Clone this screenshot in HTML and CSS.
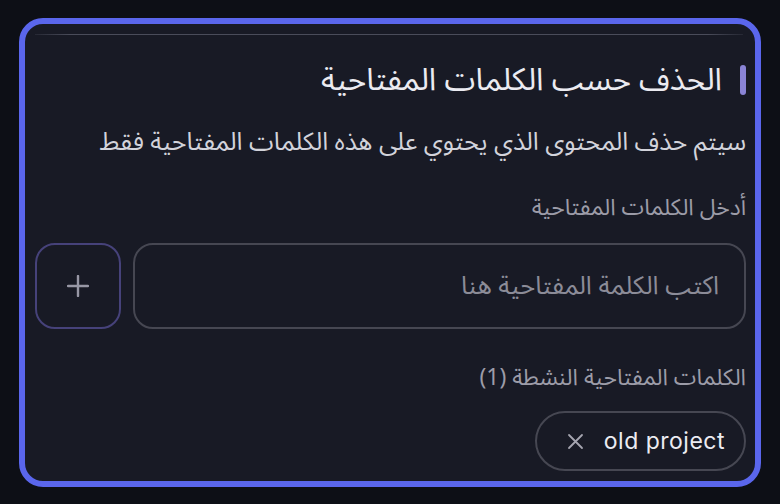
FILE: index.html
```html
<!DOCTYPE html>
<html lang="ar" dir="rtl">
<head>
<meta charset="utf-8">
<link rel="stylesheet" href="styles.css">
</head>
<body>
<div class="frame">
  <div class="topline"></div>
  <h2 class="title"><span class="bar"></span><span>الحذف حسب الكلمات المفتاحية</span></h2>
  <p class="desc">سيتم حذف المحتوى الذي يحتوي على هذه الكلمات المفتاحية فقط</p>
  <div class="label">أدخل الكلمات المفتاحية</div>
  <div class="input-row">
    <div class="input"><span class="placeholder">اكتب الكلمة المفتاحية هنا</span></div>
    <button class="add" type="button" aria-label="إضافة">
      <svg width="22" height="22" viewBox="0 0 22 22"><path d="M11 1v20M1 11h20" stroke="#9797a5" stroke-width="2.4" stroke-linecap="round" fill="none"/></svg>
    </button>
  </div>
  <div class="label label2">الكلمات المفتاحية النشطة (1)</div>
  <div class="chips">
    <div class="chip"><span class="chip-text" dir="ltr">old project</span><span class="x">
      <svg width="17" height="17" viewBox="0 0 17 17"><path d="M2 2l13 13M15 2L2 15" stroke="#a5a5b0" stroke-width="1.8" stroke-linecap="round" fill="none"/></svg>
    </span></div>
  </div>
</div>
</body>
</html>
```

FILE: styles.css
```css
* { box-sizing: border-box; }
html, body { margin: 0; padding: 0; }
body {
  background: #0d0f16;
  font-family: "Noto Sans Arabic", "DejaVu Sans", "Noto Sans", sans-serif;
  width: 780px;
  height: 504px;
  overflow: hidden;
}
.frame {
  margin: 18px 19px 0 19px;
  width: 742px;
  height: 469px;
  border: 6px solid #5a66ec;
  border-radius: 24px;
  background: #181a25;
  padding: 10px 9px 0 10px;
  overflow: hidden;
}
.topline {
  height: 1px;
  margin: 0 3px 0 0;
  background: linear-gradient(to left, rgba(70,72,86,0.3), #4a4c5a 5%, #4a4c5a 95%, rgba(70,72,86,0.3));
}
.title {
  margin: 29px 0 0 0;
  display: flex;
  align-items: center;
  gap: 18px;
  font-size: 31.3px;
  font-weight: 400;
  line-height: 32px;
  color: #ebebf1;
}
.bar {
  width: 6px;
  height: 30px;
  border-radius: 3px;
  background: #8a84d6;
  flex: none;
}
.desc {
  margin: 32px 0 0 0;
  font-size: 25px;
  line-height: 28px;
  color: #d2d3db;
  white-space: nowrap;
}
.label {
  margin-top: 40px;
  font-size: 22.8px;
  line-height: 24px;
  color: #9c9ca8;
  white-space: nowrap;
}
.input-row {
  margin-top: 23px;
  display: flex;
  gap: 12px;
}
.input {
  flex: 1;
  height: 86px;
  border: 2px solid #464752;
  border-radius: 20px;
  display: flex;
  align-items: center;
  padding: 0 25px;
}
.placeholder {
  font-size: 25.4px;
  line-height: 30px;
  color: #8c8c98;
}
.add {
  width: 86px;
  height: 86px;
  flex: none;
  border: 2px solid #46427a;
  border-radius: 20px;
  background: transparent;
  display: flex;
  align-items: center;
  justify-content: center;
  padding: 0;
}
.label2 { margin-top: 37px; }
.chips {
  margin-top: 21px;
  display: flex;
}
.chip {
  height: 60px;
  border: 2px solid #464752;
  border-radius: 30px;
  display: flex;
  align-items: center;
  gap: 20px;
  padding: 0 19px 0 30px;
}
.chip-text {
  font-family: Inter, "Noto Sans", sans-serif;
  font-size: 23px;
  letter-spacing: 0.5px;
  color: #ececf2;
}
.x { display: flex; }
```
